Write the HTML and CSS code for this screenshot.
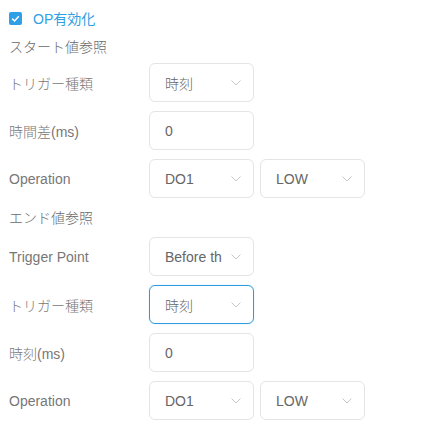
FILE: index.html
```html
<!DOCTYPE html>
<html lang="ja">
<head>
<meta charset="utf-8">
<link rel="stylesheet" href="styles.css">
</head>
<body>
<div class="panel">
  <label class="check">
    <span class="box"><svg viewBox="0 0 13 13" width="13" height="13"><path d="M3.2 6.6 L5.6 9 L9.8 4.3" fill="none" stroke="#fff" stroke-width="1.5"/></svg></span>
    <span class="check-text">OP有効化</span>
  </label>

  <div class="title">スタート値参照</div>
  <div class="row">
    <div class="label">トリガー種類</div>
    <div class="field select"><span class="val">時刻</span><svg class="chev" viewBox="0 0 10 6" width="10" height="6"><path d="M0.5 0.5 L5 5 L9.5 0.5" fill="none" stroke="#c8c8c8" stroke-width="1"/></svg></div>
  </div>
  <div class="row">
    <div class="label">時間差(ms)</div>
    <div class="field"><span class="val">0</span></div>
  </div>
  <div class="row">
    <div class="label">Operation</div>
    <div class="field select"><span class="val">DO1</span><svg class="chev" viewBox="0 0 10 6" width="10" height="6"><path d="M0.5 0.5 L5 5 L9.5 0.5" fill="none" stroke="#c8c8c8" stroke-width="1"/></svg></div>
    <div class="field select"><span class="val">LOW</span><svg class="chev" viewBox="0 0 10 6" width="10" height="6"><path d="M0.5 0.5 L5 5 L9.5 0.5" fill="none" stroke="#c8c8c8" stroke-width="1"/></svg></div>
  </div>

  <div class="title title-end">エンド値参照</div>
  <div class="row">
    <div class="label">Trigger Point</div>
    <div class="field select"><span class="val">Before the</span><svg class="chev" viewBox="0 0 10 6" width="10" height="6"><path d="M0.5 0.5 L5 5 L9.5 0.5" fill="none" stroke="#c8c8c8" stroke-width="1"/></svg></div>
  </div>
  <div class="row">
    <div class="label">トリガー種類</div>
    <div class="field select focus"><span class="val">時刻</span><svg class="chev" viewBox="0 0 10 6" width="10" height="6"><path d="M0.5 0.5 L5 5 L9.5 0.5" fill="none" stroke="#c8c8c8" stroke-width="1"/></svg></div>
  </div>
  <div class="row">
    <div class="label">時刻(ms)</div>
    <div class="field"><span class="val">0</span></div>
  </div>
  <div class="row">
    <div class="label">Operation</div>
    <div class="field select"><span class="val">DO1</span><svg class="chev" viewBox="0 0 10 6" width="10" height="6"><path d="M0.5 0.5 L5 5 L9.5 0.5" fill="none" stroke="#c8c8c8" stroke-width="1"/></svg></div>
    <div class="field select"><span class="val">LOW</span><svg class="chev" viewBox="0 0 10 6" width="10" height="6"><path d="M0.5 0.5 L5 5 L9.5 0.5" fill="none" stroke="#c8c8c8" stroke-width="1"/></svg></div>
  </div>
</div>
</body>
</html>
```

FILE: styles.css
```css
html, body {
  margin: 0;
  padding: 0;
  background: #fff;
}
body {
  font-family: "Liberation Sans", "Noto Sans CJK JP", sans-serif;
  font-size: 14px;
  color: #757575;
}
.panel {
  padding: 8px 0 0 9px;
  display: flex;
  flex-direction: column;
}
.check {
  display: flex;
  align-items: center;
  height: 20px;
  gap: 11px;
}
.box {
  width: 13px;
  height: 13px;
  background: #2f9fe6;
  border-radius: 2px;
  display: flex;
}
.check-text {
  color: #2f9fe6;
}
.title {
  height: 20px;
  line-height: 20px;
  margin-top: 9px;
  margin-bottom: 6px;
  color: #6a6a6a;
  font-weight: 300;
}
.title-end {
  margin-top: 10px;
  margin-bottom: 9px;
}
.row {
  display: flex;
  align-items: center;
  height: 39px;
  gap: 6px;
}
.row + .row {
  margin-top: 9px;
}
.label {
  width: 134px;
  color: #777;
  font-weight: 300;
}
.field {
  box-sizing: border-box;
  width: 105px;
  height: 39px;
  border: 1px solid #e4e4e4;
  border-radius: 6px;
  display: flex;
  align-items: center;
  padding: 0 12px 0 15px;
  color: #666;
  font-weight: 300;
}
.val {
  flex: 1;
  white-space: nowrap;
  overflow: hidden;
}
.chev {
  flex: none;
  margin-left: 9px;
}
.focus {
  border-color: #2d9be0;
  box-shadow: 0 0 1px rgba(45, 155, 224, 0.5);
}
```
